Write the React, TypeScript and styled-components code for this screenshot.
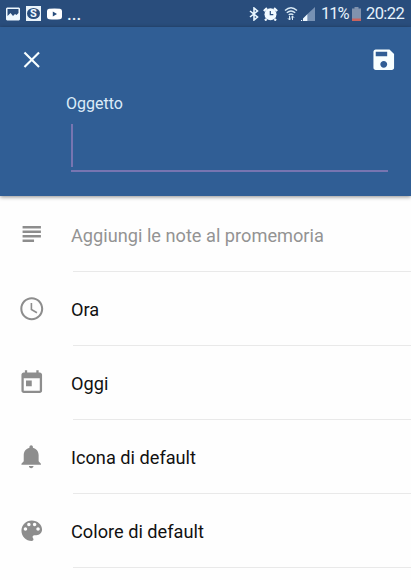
import React from "react";
import styled, { createGlobalStyle } from "styled-components";

interface ReminderRow {
  label: string;
  icon: React.ReactNode;
  hint?: boolean;
}

const MaterialIcon: React.FC<{ path: string }> = ({ path }) => (
  <IconSvg viewBox="0 0 24 24">
    <path d={path} />
  </IconSvg>
);

const rows: ReminderRow[] = [
  {
    label: "Aggiungi le note al promemoria",
    hint: true,
    icon: (
      <MaterialIcon path="M20 8.300H4v2.100h16V8.300zm0 3.900H4v2.100h16v-2.100zM4 18.300h10v-2.100H4v2.100zM4 4.400v2.100h16V4.400H4z" />
    ),
  },
  {
    label: "Ora",
    icon: (
      <MaterialIcon path="M11.99 2C6.47 2 2 6.48 2 12s4.47 10 9.99 10C17.52 22 22 17.52 22 12S17.52 2 11.99 2zM12 20.2c-4.53 0-8.2-3.67-8.2-8.2S7.47 3.8 12 3.8s8.2 3.67 8.2 8.2-3.67 8.2-8.2 8.2zM12.4 7H11v6l5.2 3.1.7-1.2-4.5-2.7z" />
    ),
  },
  {
    label: "Oggi",
    icon: (
      <MaterialIcon path="M19 3h-1V1h-2v2H8V1H6v2H5c-1.11 0-1.99.9-1.99 2L3 19c0 1.1.89 2 2 2h14c1.1 0 2-.9 2-2V5c0-1.1-.9-2-2-2zm0 16H5V8h14v11zM7 10h5v5H7z" />
    ),
  },
  {
    label: "Icona di default",
    icon: (
      <MaterialIcon path="M11.5 22c1.1 0 2-.9 2-2h-4c0 1.1.9 2 2 2zm6.5-6v-5.5c0-3.07-2.13-5.64-5-6.32V3.5c0-.83-.67-1.5-1.5-1.5S10 2.67 10 3.5v.68c-2.87.68-5 3.25-5 6.32V16l-2 2v1h17v-1l-2-2z" />
    ),
  },
  {
    label: "Colore di default",
    icon: (
      <MaterialIcon path="M12 3c-4.97 0-9 4.03-9 9s4.03 9 9 9c.83 0 1.5-.67 1.5-1.5 0-.39-.15-.74-.39-1.01-.23-.26-.38-.61-.38-.99 0-.83.67-1.5 1.5-1.5H16c2.76 0 5-2.24 5-5 0-4.42-4.03-8-9-8zm-5.5 9c-.83 0-1.5-.67-1.5-1.5S5.67 9 6.5 9 8 9.67 8 10.5 7.33 12 6.5 12zm3-4C8.67 8 8 7.33 8 6.5S8.67 5 9.5 5s1.5.67 1.5 1.5S10.33 8 9.5 8zm5 0c-.83 0-1.5-.67-1.5-1.5S13.67 5 14.5 5s1.5.67 1.5 1.5S15.33 8 14.5 8zm3 4c-.83 0-1.5-.67-1.5-1.5S16.67 9 17.5 9s1.5.67 1.5 1.5-.67 1.5-1.5 1.5z" />
    ),
  },
];

const StatusBar: React.FC = () => (
  <StatusBarContainer>
    <Notifications>
      <svg width="14" height="14" viewBox="0 0 14 14">
        <path
          fill="#eef8ff"
          fillRule="evenodd"
          d="M1 .5h12l1 1v11l-1 1H1l-1-1v-11zM1.5 2v7l3-3 2.5 3 2-2 1.5 1 2-2V2z"
        />
      </svg>
      <BadgeIcon>
        <BadgeOval>S</BadgeOval>
      </BadgeIcon>
      <svg width="15" height="12" viewBox="0 0 15 12">
        <path
          fill="#fff"
          fillRule="evenodd"
          d="M2 .8Q7.500 0 13 .8 15 1 15 3v6q0 2-2 2.200-5.500.8-11 0Q0 11 0 9V3Q0 1 2 .8zM5.800 3.500v5L10 6z"
        />
      </svg>
      <Ellipsis>...</Ellipsis>
    </Notifications>
    <SystemInfo>
      <svg width="10" height="14" viewBox="0 0 10 14">
        <path
          d="M1 4l7.500 6L5 13V1l3.500 3L1 10"
          fill="none"
          stroke="#e9f7ff"
          strokeWidth="1.600"
        />
      </svg>
      <AlarmSvg width="15" height="14" viewBox="0 0 15 14">
        <path
          d="M.8 4L4 1.200M14.200 4L11 1.200M3.500 12l-1.500 1.500M11.500 12l1.500 1.500"
          stroke="#f2faff"
          strokeWidth="2.200"
        />
        <circle cx="7.500" cy="7.200" r="6" fill="#f2faff" />
        <path d="M7.300 4v3.600H10.300" fill="none" stroke="#294d7c" strokeWidth="1.200" />
      </AlarmSvg>
      <WifiSvg width="14" height="15" viewBox="0 0 14 15">
        <g fill="none" stroke="#d8e9f5" strokeWidth="1.400">
          <path d="M1 4.500Q7-1.200 13 4.500" />
          <path d="M2.800 6.800Q7 3 11.200 6.800" />
          <path d="M4.700 9Q7 7 9.300 9" />
        </g>
        <path
          d="M5.500 10v4M4 12.300L5.500 14 7 12.300M8.500 14v-4M7 11.700L8.500 10l1.500 1.700"
          fill="none"
          stroke="#d8e9f5"
        />
      </WifiSvg>
      <SignalSvg width="14" height="14" viewBox="0 0 14 14">
        <path d="M6.500 7L14 0v14H6.500z" fill="#7791b3" />
        <path d="M0 13h1.200v1H0zM2 11.500L6.500 7v7H2z" fill="#edf7ff" />
      </SignalSvg>
      <BatteryLevel>11%</BatteryLevel>
      <BatterySvg width="9" height="14" viewBox="0 0 9 14">
        <path d="M2.500 0h4v1.500H9V14H0V1.500h2.500z" fill="#8092ad" />
        <path d="M0 11.500h9V14H0z" fill="#c9645e" />
      </BatterySvg>
      <Clock>20:22</Clock>
    </SystemInfo>
  </StatusBarContainer>
);

const App: React.FC = () => {
  return (
    <Screen>
      <GlobalStyle />
      <StatusBar />
      <Header>
        <Toolbar>
          <MaterialIcon path="M19 6.300L17.700 5 12 10.700 6.300 5 5 6.300 10.700 12 5 17.700 6.300 19l5.700-5.700 5.700 5.700 1.300-1.300-5.700-5.700z" />
          <MaterialIcon path="M17 3H5c-1.110 0-2 .9-2 2v14c0 1.100.89 2 2 2h14c1.100 0 2-.9 2-2V7l-4-4zm-5 16c-1.660 0-3-1.340-3-3s1.340-3 3-3 3 1.340 3 3-1.340 3-3 3zm3-10H5V5h10v4z" />
        </Toolbar>
        <FieldLabel>Oggetto</FieldLabel>
        <SubjectField>
          <Caret />
        </SubjectField>
      </Header>
      <List>
        {rows.map(({ label, icon, hint }) => (
          <Row key={label}>
            <RowIcon>{icon}</RowIcon>
            <RowBody>
              <RowLabel $hint={hint}>{label}</RowLabel>
            </RowBody>
          </Row>
        ))}
      </List>
    </Screen>
  );
};

export default App;

const GlobalStyle = createGlobalStyle`
  * {
    box-sizing: border-box;
  }
  body {
    margin: 0;
    overflow: hidden;
    background: #fefefe;
    font-family: Roboto, sans-serif;
  }
`;

const Screen = styled.div`
  width: 411px;
  height: 580px;
  overflow: hidden;
  background: #fefefe;
`;

const StatusBarContainer = styled.div`
  display: flex;
  justify-content: space-between;
  height: 27px;
  padding: 0 7px 0 6px;
  background: #294d7c;
`;

const Notifications = styled.div`
  display: flex;
  align-items: center;
  gap: 6px;
`;

const BadgeIcon = styled.div`
  display: flex;
  align-items: center;
  justify-content: center;
  width: 15px;
  height: 15px;
  background: #e9f3fa;
`;

const BadgeOval = styled.div`
  width: 13px;
  height: 11px;
  border-radius: 50%;
  background: #294d7c;
  color: #f2faff;
  font-size: 11px;
  font-weight: 700;
  line-height: 11px;
  text-align: center;
`;

const Ellipsis = styled.span`
  margin-left: -1px;
  color: #e9f3fa;
  font-size: 17px;
  font-weight: 500;
  line-height: 30px;
`;

const SystemInfo = styled.div`
  display: flex;
  align-items: center;
`;

const AlarmSvg = styled.svg`
  margin-left: 4px;
`;

const WifiSvg = styled.svg`
  margin-left: 6px;
`;

const SignalSvg = styled.svg`
  margin-left: 3px;
`;

const BatterySvg = styled.svg`
  margin: 0 5px 0 3px;
`;

const StatusText = styled.span`
  color: #e6f3fc;
  font-size: 16.5px;
  line-height: 30px;
  letter-spacing: -0.6px;
  white-space: nowrap;
`;

const BatteryLevel = styled(StatusText)`
  width: 28px;
  margin-left: 6px;
  letter-spacing: -1px;
`;

const Clock = styled(StatusText)`
  width: 38px;
`;

const Header = styled.header`
  height: 169px;
  padding: 18px 14px 0 18px;
  background: #305e95;
  box-shadow: 0 1px 4px rgba(0, 0, 0, 0.45);
`;

const Toolbar = styled.div`
  display: flex;
  justify-content: space-between;
  height: 28px;
  padding-top: 1px;
  color: #f8ffff;
`;

const IconSvg = styled.svg`
  display: block;
  width: 27.5px;
  height: 27.5px;
  fill: currentColor;
`;

const FieldLabel = styled.div`
  margin: 21px 0 0 48px;
  color: #dcecf8;
  font-size: 16px;
  line-height: 20px;
`;

const SubjectField = styled.div`
  width: 317px;
  height: 48px;
  margin: 10px 0 0 53px;
  border-bottom: 2px solid #7775b1;
`;

const Caret = styled.div`
  width: 2px;
  height: 43px;
  background: #7775b1;
`;

const List = styled.main`
  padding-top: 2px;
`;

const Row = styled.div`
  display: flex;
  height: 74px;
`;

const RowIcon = styled.div`
  display: flex;
  align-items: center;
  width: 73px;
  padding-left: 18px;
  color: #8d8d8d;
`;

const RowBody = styled.div`
  display: flex;
  flex: 1;
  align-items: center;
  border-bottom: 1px solid #e9e9e9;
`;

const RowLabel = styled.span<{ $hint?: boolean }>`
  margin: 2px 0 0 -2px;
  color: ${(props) => (props.$hint ? "#939393" : "#111")};
  font-size: 18.2px;
  line-height: 24px;
`;
